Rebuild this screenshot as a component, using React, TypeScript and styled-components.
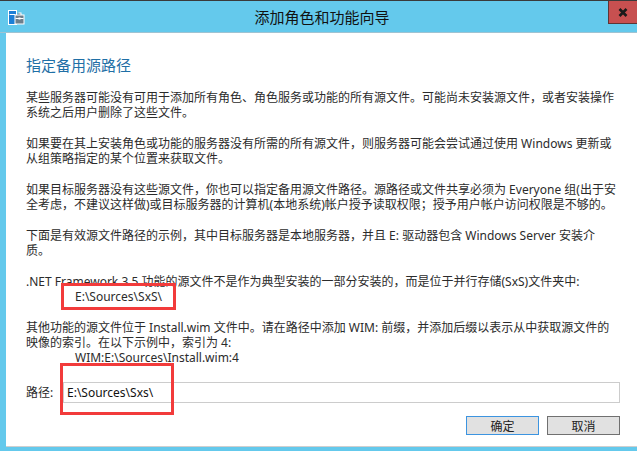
import styled, { createGlobalStyle } from 'styled-components';

type Line = { text: string; indent?: boolean; marked?: boolean };

const PARAGRAPHS: Line[][] = [
  [
    { text: '某些服务器可能没有可用于添加所有角色、角色服务或功能的所有源文件。可能尚未安装源文件，或者安装操作' },
    { text: '系统之后用户删除了这些文件。' },
  ],
  [
    { text: '如果要在其上安装角色或功能的服务器没有所需的所有源文件，则服务器可能会尝试通过使用 Windows 更新或' },
    { text: '从组策略指定的某个位置来获取文件。' },
  ],
  [
    { text: '如果目标服务器没有这些源文件，你也可以指定备用源文件路径。源路径或文件共享必须为 Everyone 组(出于安' },
    { text: '全考虑，不建议这样做)或目标服务器的计算机(本地系统)帐户授予读取权限；授予用户帐户访问权限是不够的。' },
  ],
  [
    { text: '下面是有效源文件路径的示例，其中目标服务器是本地服务器，并且 E: 驱动器包含 Windows Server 安装介' },
    { text: '质。' },
  ],
  [
    { text: '.NET Framework 3.5 功能的源文件不是作为典型安装的一部分安装的，而是位于并行存储(SxS)文件夹中:' },
    { text: 'E:\\Sources\\SxS\\', indent: true, marked: true },
  ],
  [
    { text: '其他功能的源文件位于 Install.wim 文件中。请在路径中添加 WIM: 前缀，并添加后缀以表示从中获取源文件的' },
    { text: '映像的索引。在以下示例中，索引为 4:' },
    { text: 'WIM:E:\\Sources\\Install.wim:4', indent: true },
  ],
];

const ServerIcon = () => (
  <svg width="17" height="16" viewBox="0 0 17 16">
    <rect x="0.5" y="0.5" width="8" height="14" fill="#1c7fd6" stroke="#fff" />
    <rect x="1.5" y="4" width="6" height="1" fill="#fff" />
    <path d="M6.5 4.5h4v-2h3v2h3v10h-10z" fill="#fff" />
    <rect x="7.5" y="5.5" width="8" height="8" fill="#6d7f8c" />
    <rect x="9.5" y="3.5" width="3" height="1" fill="#6d7f8c" />
    <rect x="7.5" y="8" width="8" height="1" fill="#fff" />
    <rect x="10.5" y="7.5" width="2" height="2" fill="#fff" />
  </svg>
);

const CloseGlyph = () => (
  <svg width="10" height="9" viewBox="0 0 10 9">
    <path d="M1.5 1 L8.5 8 M8.5 1 L1.5 8" stroke="#1a1a1a" strokeWidth="2.6" />
  </svg>
);

const App = () => {
  return (
    <>
      <GlobalStyle />
      <Window>
        <TitleBar>
          <AppIcon>
            <ServerIcon />
          </AppIcon>
          <Title>添加角色和功能向导</Title>
          <CloseButton>
            <CloseGlyph />
          </CloseButton>
        </TitleBar>
        <Body>
          <Heading>指定备用源路径</Heading>
          {PARAGRAPHS.map((lines, idx) => (
            <Paragraph key={'p' + idx.toString()}>
              {lines.map((line, i) => (
                <TextLine key={line.text + i.toString()} $indent={!!line.indent}>
                  {line.marked ? (
                    <Marked>
                      {line.text}
                      <Highlight $left={-14} $top={-6} $width={115} $height={27} />
                    </Marked>
                  ) : (
                    line.text
                  )}
                </TextLine>
              ))}
            </Paragraph>
          ))}
          <PathRow>
            <PathLabel>路径:</PathLabel>
            <InputWrap>
              <PathInput readOnly defaultValue={'E:\\Sources\\Sxs\\'} />
              <Highlight $left={-3} $top={-19} $width={114} $height={52} />
            </InputWrap>
          </PathRow>
          <ButtonRow>
            <DialogButton $primary>确定</DialogButton>
            <DialogButton>取消</DialogButton>
          </ButtonRow>
        </Body>
      </Window>
    </>
  );
};

export default App;

const GlobalStyle = createGlobalStyle`
  html,
  body {
    margin: 0;
    padding: 0;
  }

  body {
    width: 637px;
    height: 451px;
    overflow: hidden;
    background: #64c9ec;
    font-family: 'Segoe UI', 'Noto Sans', 'Noto Sans CJK SC', sans-serif;
  }
`;

const Window = styled.div`
  display: flex;
  flex-direction: column;
  width: 637px;
  height: 451px;
  box-sizing: border-box;
  padding: 0 0 4px 6px;

  background: #64c9ec;
  border-top: 1px solid #3a3a3a;
`;

const TitleBar = styled.div`
  position: relative;
  display: flex;
  flex-shrink: 0;
  align-items: center;
  justify-content: center;
  height: 31px;
  margin-left: -6px;

  border-bottom: 1px solid #9fc3d2;
`;

const AppIcon = styled.div`
  position: absolute;
  top: 9px;
  left: 8px;
  display: flex;
`;

const Title = styled.span`
  padding: 1px 0 0 7px;

  color: #111;
  font-family: 'Noto Sans CJK SC', sans-serif;
  font-size: 15px;
  line-height: 20px;
`;

const CloseButton = styled.div`
  position: absolute;
  top: 0;
  right: 0;
  display: flex;
  align-items: center;
  justify-content: center;
  box-sizing: border-box;
  width: 29px;
  height: 23px;

  background: #c75050;
  border-left: 1px solid #5e3434;
  border-bottom: 1px solid #5e3434;
`;

const Body = styled.div`
  display: flex;
  flex-direction: column;
  flex: 1;
  min-height: 0;
  box-sizing: border-box;
  padding: 22px 17px 11px 20px;

  background: #fff;
  border-bottom: 1px solid #cfcfcf;
`;

const Heading = styled.h1`
  margin: 0 0 15px 0;

  color: #1f6fa6;
  font-family: 'Noto Sans CJK SC', sans-serif;
  font-size: 15px;
  font-weight: 400;
  line-height: 20px;
`;

const Paragraph = styled.p`
  margin: 0 0 16px 0;

  color: #2b2b2b;
  font-size: 12px;
  line-height: 15px;
  white-space: nowrap;

  &:last-of-type {
    margin-bottom: 0;
  }
`;

const TextLine = styled.span<{ $indent: boolean }>`
  display: block;
  padding-left: ${({ $indent }) => ($indent ? '49px' : '0')};
`;

const Marked = styled.span`
  position: relative;
  display: inline-block;
`;

const Highlight = styled.span<{ $left: number; $top: number; $width: number; $height: number }>`
  position: absolute;
  top: ${({ $top }) => $top}px;
  left: ${({ $left }) => $left}px;
  box-sizing: border-box;
  width: ${({ $width }) => $width}px;
  height: ${({ $height }) => $height}px;

  border: 3px solid #f23b3b;
  pointer-events: none;
`;

const PathRow = styled.div`
  display: flex;
  flex-shrink: 0;
  gap: 9px;
  align-items: center;
  margin-top: 17px;
`;

const PathLabel = styled.span`
  flex-shrink: 0;
  width: 28px;

  color: #2b2b2b;
  font-size: 12px;
  line-height: 15px;
  white-space: nowrap;
`;

const InputWrap = styled.div`
  position: relative;
  display: flex;
  flex: 1;
`;

const PathInput = styled.input`
  flex: 1;
  box-sizing: border-box;
  height: 21px;
  margin: 0;
  padding: 0 3px;

  color: #111;
  font-family: inherit;
  font-size: 12px;
  background: #fff;
  border: 1px solid #cccccc;
  outline: none;
`;

const ButtonRow = styled.div`
  display: flex;
  flex-shrink: 0;
  gap: 8px;
  justify-content: flex-end;
  margin-top: 13px;
`;

const DialogButton = styled.button<{ $primary?: boolean }>`
  box-sizing: border-box;
  width: 73px;
  height: 19px;
  padding: 0;

  color: #222;
  font-family: 'Noto Sans CJK SC', sans-serif;
  font-size: 12px;
  line-height: 15px;
  background: #e1e1e1;
  border: 1px solid ${({ $primary }) => ($primary ? '#3c94e0' : '#707070')};
  border-radius: 0;
`;
